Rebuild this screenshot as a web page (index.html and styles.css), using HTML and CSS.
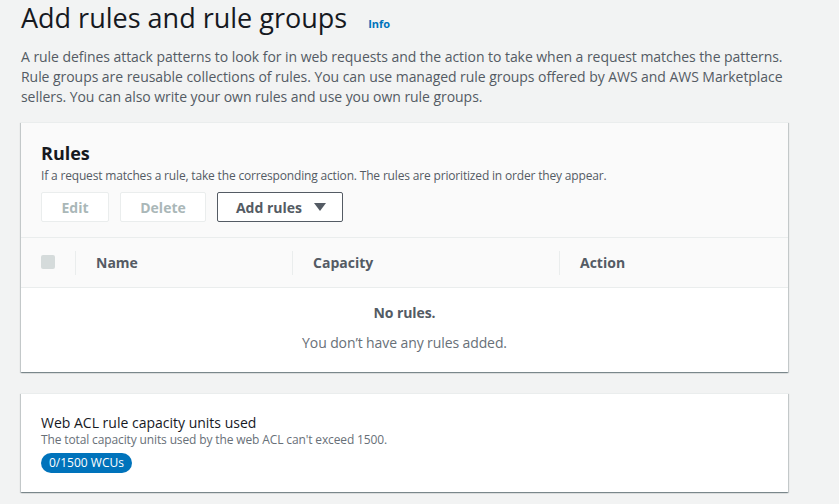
FILE: index.html
```html
<!DOCTYPE html>
<html lang="en">
<head>
<meta charset="utf-8">
<title>Add rules and rule groups</title>
<link rel="stylesheet" href="styles.css">
</head>
<body>
<main class="page">
  <header class="page-header">
    <h1 class="title">Add rules and rule groups</h1>
    <a class="info" href="#">Info</a>
  </header>
  <p class="intro">A rule defines attack patterns to look for in web requests and the action to take when a request matches the patterns. Rule groups are reusable collections of rules. You can use managed rule groups offered by AWS and AWS Marketplace sellers. You can also write your own rules and use you own rule groups.</p>

  <section class="panel rules-panel">
    <div class="panel-head">
      <h2 class="panel-title">Rules</h2>
      <p class="panel-desc">If a request matches a rule, take the corresponding action. The rules are prioritized in order they appear.</p>
      <div class="actions">
        <button class="btn btn-disabled btn-edit">Edit</button>
        <button class="btn btn-disabled btn-delete">Delete</button>
        <button class="btn btn-normal btn-add">Add rules <span class="caret"></span></button>
      </div>
    </div>
    <div class="table-head">
      <div class="th th-check"><span class="checkbox"></span></div>
      <div class="th th-name">Name</div>
      <div class="th th-cap">Capacity</div>
      <div class="th th-action">Action</div>
    </div>
    <div class="empty">
      <div class="empty-title">No rules.</div>
      <div class="empty-text">You don’t have any rules added.</div>
    </div>
  </section>

  <section class="panel wcu-panel">
    <h3 class="wcu-title">Web ACL rule capacity units used</h3>
    <p class="wcu-desc">The total capacity units used by the web ACL can't exceed 1500.</p>
    <span class="badge">0/1500 WCUs</span>
  </section>
</main>
</body>
</html>
```

FILE: styles.css
```css
* { box-sizing: border-box; }
html, body { margin: 0; padding: 0; }
body {
  background: #f2f3f3;
  font-family: "Open Sans", "Noto Sans", sans-serif;
  color: #16191f;
  width: 839px;
  height: 504px;
  overflow: hidden;
}
.page {
  width: 767px;
  margin-left: 21px;
  padding-top: 1px;
}
.page-header {
  display: flex;
  align-items: baseline;
  gap: 21px;
}
.title {
  margin: 0;
  font-size: 27px;
  font-weight: 400;
  line-height: 34px;
  color: #16191f;
}
.info {
  font-size: 11px;
  font-weight: 700;
  color: #0073bb;
  text-decoration: none;
}
.intro {
  margin: 12px 0 0;
  font-size: 14px;
  line-height: 20px;
  color: #545b64;
  width: 770px;
  letter-spacing: -0.05px;
}
.panel {
  background: #fff;
  box-shadow: 0 1px 1px 0 rgba(0,28,36,.3), 1px 1px 1px 0 rgba(0,28,36,.15), -1px 1px 1px 0 rgba(0,28,36,.15);
  border-top: 1px solid #eaeded;
}
.rules-panel { margin-top: 15px; }
.panel-head {
  background: #fafafa;
  padding: 19px 20px 15px;
  border-bottom: 1px solid #eaeded;
}
.panel-title {
  margin: 0;
  font-size: 18px;
  line-height: 22px;
  font-weight: 700;
  color: #16191f;
}
.panel-desc {
  margin: 4px 0 0;
  font-size: 12px;
  line-height: 16px;
  color: #545b64;
  letter-spacing: -0.17px;
}
.actions {
  display: flex;
  gap: 11px;
  margin-top: 8px;
}
.btn {
  height: 30px;
  font-family: inherit;
  font-size: 14px;
  font-weight: 700;
  border-radius: 2px;
  background: #fff;
  padding: 0;
  display: inline-flex;
  align-items: center;
  justify-content: center;
  white-space: nowrap;
}
.btn-disabled {
  border: 1px solid #eaeded;
  color: #aab7b8;
}
.btn-edit { width: 68px; }
.btn-delete { width: 86px; }
.btn-normal {
  border: 1px solid #545b64;
  color: #545b64;
}
.btn-add { width: 126px; gap: 12px; padding-left: 2px; }
.caret {
  width: 0; height: 0;
  border-left: 6px solid transparent;
  border-right: 6px solid transparent;
  border-top: 8px solid #545b64;
}
.table-head {
  display: grid;
  grid-template-columns: 54px 217px 267px 1fr;
  height: 50px;
  background: #fafafa;
  border-bottom: 1px solid #eaeded;
  align-items: center;
}
.th {
  height: 24px;
  display: flex;
  align-items: center;
  padding-left: 20px;
  font-size: 14px;
  font-weight: 700;
  color: #545b64;
  border-left: 1px solid #eaeded;
}
.th-check { border-left: none; padding-left: 20px; }
.checkbox {
  width: 14px; height: 14px;
  background: #d5dbdb;
  border-radius: 2px;
  margin-top: -2px;
}
.empty {
  text-align: center;
  padding: 15px 0 19px;
  letter-spacing: -0.1px;
}
.empty-title {
  font-size: 14px;
  font-weight: 700;
  color: #545b64;
  line-height: 20px;
}
.empty-text {
  margin-top: 10px;
  font-size: 14px;
  color: #687078;
  line-height: 20px;
}
.wcu-panel {
  margin-top: 21px;
  padding: 20px 20px 18px;
  height: 99px;
}
.wcu-title {
  margin: 0;
  font-size: 14px;
  font-weight: 400;
  line-height: 18px;
  color: #16191f;
}
.wcu-desc {
  margin: 0;
  font-size: 12px;
  line-height: 16px;
  color: #687078;
  letter-spacing: -0.13px;
}
.badge {
  display: inline-block;
  margin-top: 5px;
  height: 20px;
  background: #0073bb;
  color: #fff;
  font-size: 12px;
  line-height: 20px;
  padding: 0 8px;
  border-radius: 10px;
}
```
